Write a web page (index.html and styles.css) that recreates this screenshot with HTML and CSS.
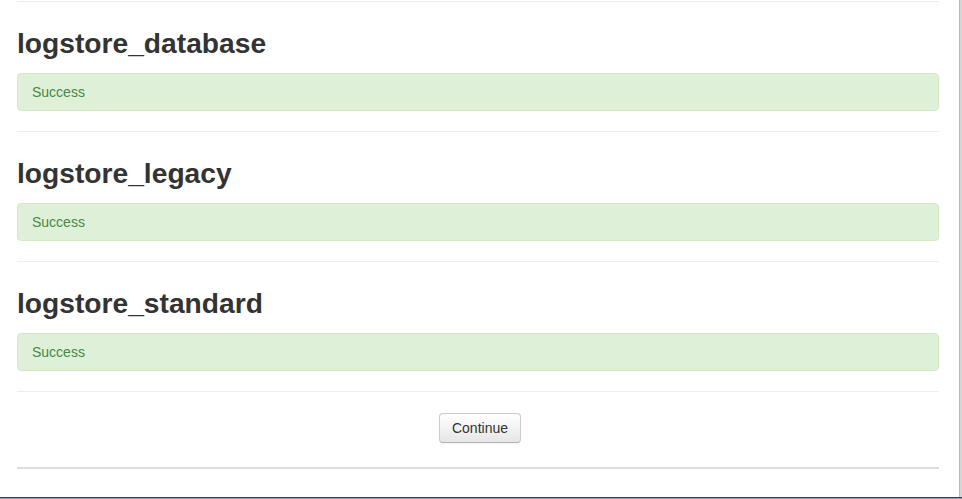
FILE: index.html
```html
<!DOCTYPE html>
<html>
<head>
  <title>Upgrading plugins</title>
  <link rel="stylesheet" href="styles.css">
</head>
<body>

<div class="window">
  <div class="page">
    <div class="plugin">
      <h2>logstore_database</h2>
      <div class="alert-success">Success</div>
    </div>
    <div class="plugin">
      <h2>logstore_legacy</h2>
      <div class="alert-success">Success</div>
    </div>
    <div class="plugin">
      <h2>logstore_standard</h2>
      <div class="alert-success">Success</div>
    </div>
    <div class="continuebutton">
      <button type="button">Continue</button>
    </div>
    <div class="footer-rule"></div>
  </div>
  <div class="edge"></div>
</div>
<div class="taskbar"></div>

</body>
</html>
```

FILE: styles.css
```css
html, body {
  margin: 0;
  height: 499px;
  overflow: hidden;
}

body {
  display: flex;
  flex-direction: column;
  background-color: #fff;
  font-family: "Liberation Sans", Arial, sans-serif;
  font-size: 14px;
  line-height: 20px;
  color: #333;
}

.window {
  flex: 1;
  display: flex;
  min-height: 0;
}

.page {
  flex: 1;
  padding: 1px 20px 0 17px;
}

/* grey frame on the right side */
.edge {
  width: 2px;
  background-color: #d6d6d6;
  border-left: 1px solid #b8b8b8;
}

.plugin {
  border-top: 1px solid #eee;
  padding-top: 21px;
}

.plugin h2 {
  margin: 0 0 10px;
  font-size: 28.2px;
  line-height: 40px;
  font-weight: bold;
  color: #333;
}

.alert-success {
  padding: 8px 35px 8px 14px;
  margin-bottom: 20px;
  background-color: #dff0d8;
  border: 1px solid #d6e9c6;
  border-radius: 4px;
  color: #468847;
}

.continuebutton {
  border-top: 1px solid #eee;
  padding: 21px 0 24px 4px;
  text-align: center;
}

.continuebutton button {
  font-family: "Liberation Sans", Arial, sans-serif;
  font-size: 14px;
  line-height: 20px;
  padding: 4px 12px;
  color: #333;
  background-color: #f5f5f5;
  background-image: linear-gradient(to bottom, #fff, #e6e6e6);
  border: 1px solid #ccc;
  border-bottom-color: #b3b3b3;
  border-radius: 4px;
  box-shadow: inset 0 1px 0 rgba(255, 255, 255, 0.2), 0 1px 2px rgba(0, 0, 0, 0.05);
  cursor: pointer;
}

.footer-rule {
  border-top: 2px solid #ddd;
}

/* strip of the desktop taskbar under the window */
.taskbar {
  height: 1px;
  border-top: 1px solid #3a3f4a;
  background-color: #8a9cc0;
}
```
